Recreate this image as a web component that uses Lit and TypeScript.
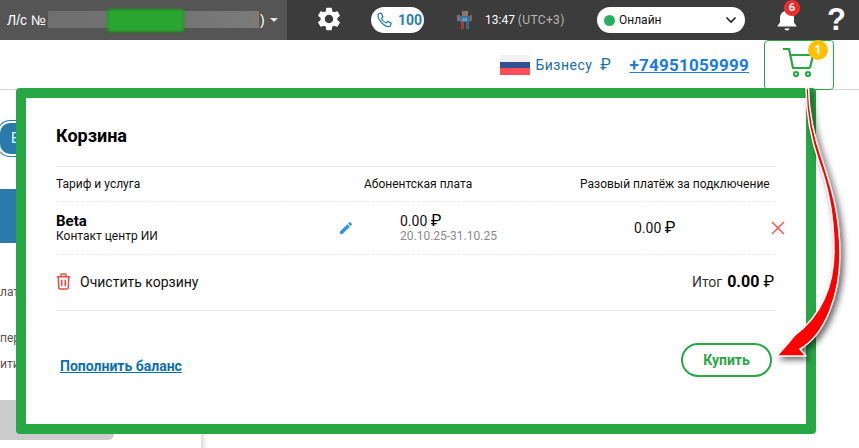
import { LitElement, html, css, svg } from "lit";
import { customElement } from "lit/decorators.js";

const gear = svg`<path d="M19.14 12.94c.04-.3.06-.61.06-.94 0-.32-.02-.64-.07-.94l2.03-1.58a.49.49 0 0 0 .12-.61l-1.92-3.32a.488.488 0 0 0-.59-.22l-2.39.96c-.5-.38-1.03-.7-1.62-.94l-.36-2.54a.484.484 0 0 0-.48-.41h-3.84c-.24 0-.43.17-.47.41l-.36 2.54c-.59.24-1.13.57-1.62.94l-2.39-.96c-.22-.08-.47 0-.59.22L2.74 8.87c-.12.21-.08.47.12.61l2.03 1.58c-.05.3-.09.63-.09.94s.02.64.07.94l-2.03 1.58a.49.49 0 0 0-.12.61l1.92 3.32c.12.22.37.29.59.22l2.39-.96c.5.38 1.03.7 1.62.94l.36 2.54c.05.24.24.41.48.41h3.84c.24 0 .44-.17.47-.41l.36-2.54c.59-.24 1.13-.56 1.62-.94l2.39.96c.22.08.47 0 .59-.22l1.92-3.32c.12-.22.07-.47-.12-.61l-2.01-1.58zM12 15.6c-1.98 0-3.6-1.62-3.6-3.6s1.62-3.6 3.6-3.6 3.6 1.62 3.6 3.6-1.62 3.6-3.6 3.6z" fill="#fff"/>`;

@customElement("app-root")
export class AppRoot extends LitElement {
  static styles = css`
    :host {
      display: block;
      position: relative;
      width: 859px;
      height: 448px;
      overflow: hidden;
      background: #fff;
      font-family: Roboto, "Liberation Sans", sans-serif;
      color: #111;
    }

    svg {
      display: block;
      flex: none;
    }

    .topbar {
      display: flex;
      height: 40px;
    }

    .account {
      width: 287px;
      box-sizing: border-box;
      display: flex;
      align-items: center;
      padding-left: 7px;
      background: #555;
      color: #fff;
      font: 14px "Liberation Sans", sans-serif;
    }

    .account-no {
      width: 40px;
      margin-right: 1px;
      white-space: nowrap;
    }

    .masked {
      position: relative;
      width: 211px;
      height: 17px;
      margin-top: -1px;
      background: linear-gradient(90deg, #6f6f6f, #747474 60%, #7a7a7a 97%, #87796d);
    }

    .masked-green {
      position: absolute;
      left: 60px;
      top: -1px;
      width: 75px;
      height: 21px;
      border-radius: 2px;
      background: #2aa52f;
      box-shadow: 0 0 0 1px #0b9a10;
      filter: blur(1.2px);
    }

    .paren {
      margin-left: 1px;
    }

    .caret {
      margin-left: 5px;
      border: 4px solid transparent;
      border-top: 4px solid #e6e6e6;
      border-left-width: 4.5px;
      border-right-width: 4.5px;
      margin-top: 4px;
    }

    .tools {
      flex: 1;
      display: flex;
      align-items: center;
      background: #3c3c3c;
      color: #fff;
    }

    .gear {
      margin-left: 28px;
      margin-top: -2px;
    }

    .calls {
      display: flex;
      align-items: center;
      gap: 5px;
      box-sizing: border-box;
      width: 53px;
      height: 26px;
      margin-left: 28px;
      padding-left: 5px;
      border-radius: 13px;
      background: #fff;
      color: #2b7fb5;
      font-size: 14px;
      font-weight: 700;
    }

    .avatar {
      margin-left: 32px;
    }

    .clock {
      margin-left: 12px;
      width: 112px;
      font-size: 12px;
      white-space: nowrap;
    }

    .clock span {
      color: #b5b5b5;
      letter-spacing: 0.35px;
    }

    .status {
      display: flex;
      align-items: center;
      box-sizing: border-box;
      width: 148px;
      height: 26px;
      padding: 0 8px 0 7px;
      border-radius: 13px;
      background: #fff;
      color: #111;
      font-size: 12px;
    }

    .status-dot {
      width: 11px;
      height: 11px;
      margin-right: 4px;
      border-radius: 50%;
      background: #27ae60;
    }

    .status-label {
      flex: 1;
    }

    .bell {
      position: relative;
      margin-left: 31px;
      margin-top: -2px;
    }

    .bell-count {
      position: absolute;
      left: 8px;
      top: -7px;
      width: 16px;
      height: 16px;
      border-radius: 50%;
      background: #f02b2b;
      color: #fff;
      font-size: 11px;
      font-weight: 700;
      line-height: 16px;
      text-align: center;
    }

    .help {
      margin-left: 29px;
      font: 700 31px/1 "Liberation Sans", sans-serif;
      margin-top: -2px;
    }

    .subbar {
      display: flex;
      justify-content: flex-end;
      align-items: center;
      height: 50px;
      box-sizing: border-box;
      padding-right: 25px;
      border-bottom: 1px solid #d5d5d5;
    }

    .flag {
      width: 30px;
      height: 20px;
      margin-right: 5px;
      margin-top: 1px;
      background: linear-gradient(#f2f2f2 33%, #34508f 33% 66%, #ff4d5a 66%);
    }

    .balance {
      color: #1c6ea4;
      font-size: 14px;
      letter-spacing: 0.5px;
      white-space: nowrap;
    }

    .rub-gap {
      margin-left: 4px;
      font-size: 16px;
    }

    .phone {
      margin-left: 18px;
      color: #1a7be0;
      font-size: 17px;
      font-weight: 700;
      letter-spacing: 0.25px;
      text-decoration: underline;
    }

    .cart {
      position: relative;
      display: flex;
      justify-content: center;
      align-items: center;
      box-sizing: border-box;
      width: 70px;
      height: 50px;
      margin-left: 15px;
      border: 1px solid #28a745;
      border-radius: 4px;
      background: #fff;
    }

    .cart-count {
      position: absolute;
      left: 43px;
      top: -1px;
      width: 20px;
      height: 20px;
      border-radius: 50%;
      background: #ffc107;
      color: #fff;
      font-size: 12px;
      font-weight: 700;
      line-height: 20px;
      text-align: center;
    }

    .backdrop {
      width: 201px;
      height: 358px;
      box-shadow: 2px 0 6px rgba(0, 0, 0, 0.2);
      font-size: 12px;
      color: #555;
    }

    .old-btn {
      width: 30px;
      height: 31px;
      margin-top: 33px;
      box-sizing: border-box;
      padding-left: 11px;
      border-radius: 10px;
      background: #2a7aab;
      box-shadow: 0 0 0 2px #fff, 0 0 0 3px #2a7aab;
      color: #dff;
      font-size: 14px;
      line-height: 31px;
    }

    .old-block {
      height: 54px;
      margin-top: 35px;
      background: #2a7aab;
    }

    .old-line {
      line-height: 14px;
      white-space: nowrap;
    }

    .old-line-pay {
      margin-top: 42px;
    }

    .old-line-oper {
      margin-top: 32px;
    }

    .old-line-act {
      margin-top: 12px;
    }

    .old-gray {
      width: 114px;
      height: 40px;
      margin-top: 29px;
      border-radius: 0 6px 6px 0;
      background: #ccc;
    }

    .modal {
      position: absolute;
      left: 16px;
      top: 88px;
      width: 800px;
      height: 346px;
      box-sizing: border-box;
      padding: 0 30px;
      border: 10px solid #28a745;
      border-radius: 4px;
      background: #fff;
    }

    h2 {
      height: 69px;
      margin: 0;
      padding-top: 28px;
      box-sizing: border-box;
      border-bottom: 1px solid #ececec;
      font-size: 18px;
      font-weight: 700;
      line-height: 20px;
      color: #000;
    }

    .grid {
      display: grid;
      box-sizing: border-box;
      grid-template-columns: 280px 28px 216px 190px 1fr;
      align-items: center;
      border-bottom: 1px dashed #e8e8e8;
    }

    .head {
      height: 35px;
      font-size: 12px;
    }

    .head-first {
      grid-column: 1 / 3;
    }

    .item {
      height: 53px;
    }

    .item-name {
      font-size: 15px;
      font-weight: 700;
      line-height: 16px;
      color: #000;
    }

    .item-sub {
      font-size: 12px;
      line-height: 14px;
    }

    .price {
      padding-left: 36px;
      font-size: 14px;
      line-height: 16px;
    }

    .rub {
      font-size: 16px;
      line-height: 14px;
      color: #000;
    }

    .dates {
      font-size: 12px;
      line-height: 14px;
      color: #8a8a8a;
    }

    .once {
      padding-left: 54px;
      font-size: 14px;
    }

    .head-last {
      white-space: nowrap;
    }

    .edit {
      margin-left: 2px;
    }

    .remove {
      margin-left: 1px;
    }

    .summary {
      display: flex;
      align-items: center;
      height: 56px;
      box-sizing: border-box;
      padding: 0 2px 2px 0;
      border-bottom: 1px solid #ececec;
      font-size: 14px;
    }

    .clear {
      flex: 1;
      margin-left: 9px;
    }

    .total-label {
      color: #333;
    }

    .total {
      margin: 0 4px 0 5px;
      font-size: 16px;
      font-weight: 700;
      color: #000;
    }

    .actions {
      display: flex;
      justify-content: space-between;
      align-items: center;
      margin-top: 32px;
      padding: 0 4px;
    }

    .topup {
      margin-top: 11px;
      color: #0b6fb0;
      font-size: 14px;
      font-weight: 700;
      text-decoration: underline;
    }

    .buy {
      width: 91px;
      height: 34px;
      box-sizing: border-box;
      border: 2px solid #28a745;
      border-radius: 17px;
      background: #fff;
      color: #28a745;
      font: 700 14px Roboto, sans-serif;
    }

    .arrow {
      position: absolute;
      left: 0;
      top: 0;
      pointer-events: none;
      filter: drop-shadow(3px 3px 3px rgba(0, 0, 0, 0.6));
    }
  `;

  render() {
    return html`
      <div class="topbar">
        <div class="account">
          <span class="account-no">Л/с №</span>
          <div class="masked"><div class="masked-green"></div></div>
          <span class="paren">)</span>
          <span class="caret"></span>
        </div>
        <div class="tools">
          <svg class="gear" width="28" height="28" viewBox="0 0 24 24">${gear}</svg>
          <div class="calls">
            <svg width="17" height="18" viewBox="0 0 20 20" fill="none" stroke="#2b7fb5" stroke-width="1.500" stroke-linejoin="round">
              <path d="M3 2.500 6.200 2l2 4.200-1.900 1.600c.9 2.400 2.900 4.500 5.500 5.700l1.700-1.900 4.200 2.100-.7 3.200C15.500 18.600 11 18 7 13.500 3 9.500 1.800 5 3 2.500z" />
            </svg>
            100
          </div>
          <svg class="avatar" width="17" height="20" viewBox="0 0 17 20">
            <rect x="6" y="1" width="6" height="5" fill="#8a7a6a" />
            <rect x="4" y="6" width="10" height="6" fill="#3f6f9a" />
            <rect x="1" y="5" width="3" height="6" fill="#777" />
            <rect x="14" y="5" width="2" height="6" fill="#9a5a4a" />
            <rect x="6" y="8" width="5" height="3" fill="#5aa0c8" />
            <rect x="5" y="12" width="3" height="7" fill="#a83a3a" />
            <rect x="10" y="12" width="3" height="7" fill="#3a6a8a" />
          </svg>
          <div class="clock">13:47 <span>(UTC+3)</span></div>
          <div class="status">
            <span class="status-dot"></span>
            <span class="status-label">Онлайн</span>
            <svg width="12" height="8" viewBox="0 0 12 8" fill="none" stroke="#222" stroke-width="1.600">
              <path d="M1.500 1.500 6 6l4.500-4.500" />
            </svg>
          </div>
          <div class="bell">
            <svg width="22" height="24" viewBox="0 0 22 24" fill="#fff">
              <path d="M11 1.500c1.200 0 2 .8 2 2v.6c3.200.9 5 3.500 5 6.900v4.500l2.500 3.500v.5h-19V19L4 15.500V11c0-3.400 1.800-6 5-6.900v-.6c0-1.200.8-2 2-2z" />
              <path d="M8.500 21.500h5c0 1.200-1.100 2-2.500 2s-2.500-.8-2.500-2z" />
            </svg>
            <span class="bell-count">6</span>
          </div>
          <div class="help">?</div>
        </div>
      </div>

      <div class="subbar">
        <div class="flag"></div>
        <span class="balance">Бизнесу <span class="rub-gap">₽</span></span>
        <a class="phone">+74951059999</a>
        <div class="cart">
          <svg width="34" height="34" viewBox="0 0 34 34" fill="none" stroke="#28a745" stroke-width="2.200" stroke-linejoin="round">
            <path d="M1 1h6l4 19h17" />
            <path d="M8.200 7H31l-3 13" />
            <circle cx="14" cy="26" r="2" />
            <circle cx="26" cy="26" r="2" />
          </svg>
          <span class="cart-count">1</span>
        </div>
      </div>

      <div class="backdrop">
        <div class="old-btn">Е</div>
        <div class="old-block"></div>
        <div class="old-line old-line-pay">лат</div>
        <div class="old-line old-line-oper">пер</div>
        <div class="old-line old-line-act">ити</div>
        <div class="old-gray"></div>
      </div>

      <div class="modal">
        <h2>Корзина</h2>
        <div class="grid head">
          <div class="head-first">Тариф и услуга</div>
          <div>Абонентская плата</div>
          <div class="head-last">Разовый платёж за подключение</div>
        </div>
        <div class="grid item">
          <div>
            <div class="item-name">Beta</div>
            <div class="item-sub">Контакт центр ИИ</div>
          </div>
          <svg class="edit" width="16" height="16" viewBox="0 0 24 24" fill="#2e96ee">
            <path d="M3 17.250V21h3.750L17.810 9.940l-3.750-3.750L3 17.250zM20.710 7.040c.39-.39.39-1.020 0-1.410l-2.340-2.340c-.39-.39-1.020-.39-1.410 0l-1.830 1.830 3.750 3.750 1.830-1.830z" />
          </svg>
          <div class="price">
            <div>0.00 <span class="rub">₽</span></div>
            <div class="dates">20.10.25-31.10.25</div>
          </div>
          <div class="once">0.00 <span class="rub">₽</span></div>
          <svg class="remove" width="14" height="14" viewBox="0 0 14 14" stroke="#fb5252" stroke-width="1.500">
            <path d="M1 1l12 12M13 1 1 13" />
          </svg>
        </div>
        <div class="summary">
          <svg width="15" height="17" viewBox="0 0 17 19" fill="none" stroke="#f4483f" stroke-width="1.700">
            <path d="M1 4h15M5.500 4V2.500A1.500 1.500 0 0 1 7 1h3a1.500 1.500 0 0 1 1.500 1.500V4M2.500 4l.7 12.500A1.500 1.500 0 0 0 4.700 18h7.600a1.500 1.500 0 0 0 1.500-1.500L14.500 4M6.500 7.500v7M10.500 7.500v7" />
          </svg>
          <span class="clear">Очистить корзину</span>
          <span class="total-label">Итог</span>
          <span class="total">0.00</span>
          <span class="rub">₽</span>
        </div>
        <div class="actions">
          <a class="topup">Пополнить баланс</a>
          <button class="buy">Купить</button>
        </div>
      </div>

      <svg class="arrow" width="859" height="448" viewBox="0 0 859 448">
        <path
          d="M806 88C806 115 811 140 820 165 C829 190 834 215 834 250 C834 285 822 315 794 336 L790 341 L777 356 L806 356 L800 349 C825 335 840 295 840 255 C840 215 832 190 823 162 C815 140 809 115 808.500 88Z"
          fill="#f00"
          stroke="#fff"
          stroke-width="1.500"
          stroke-linejoin="round"
        />
      </svg>
    `;
  }
}
